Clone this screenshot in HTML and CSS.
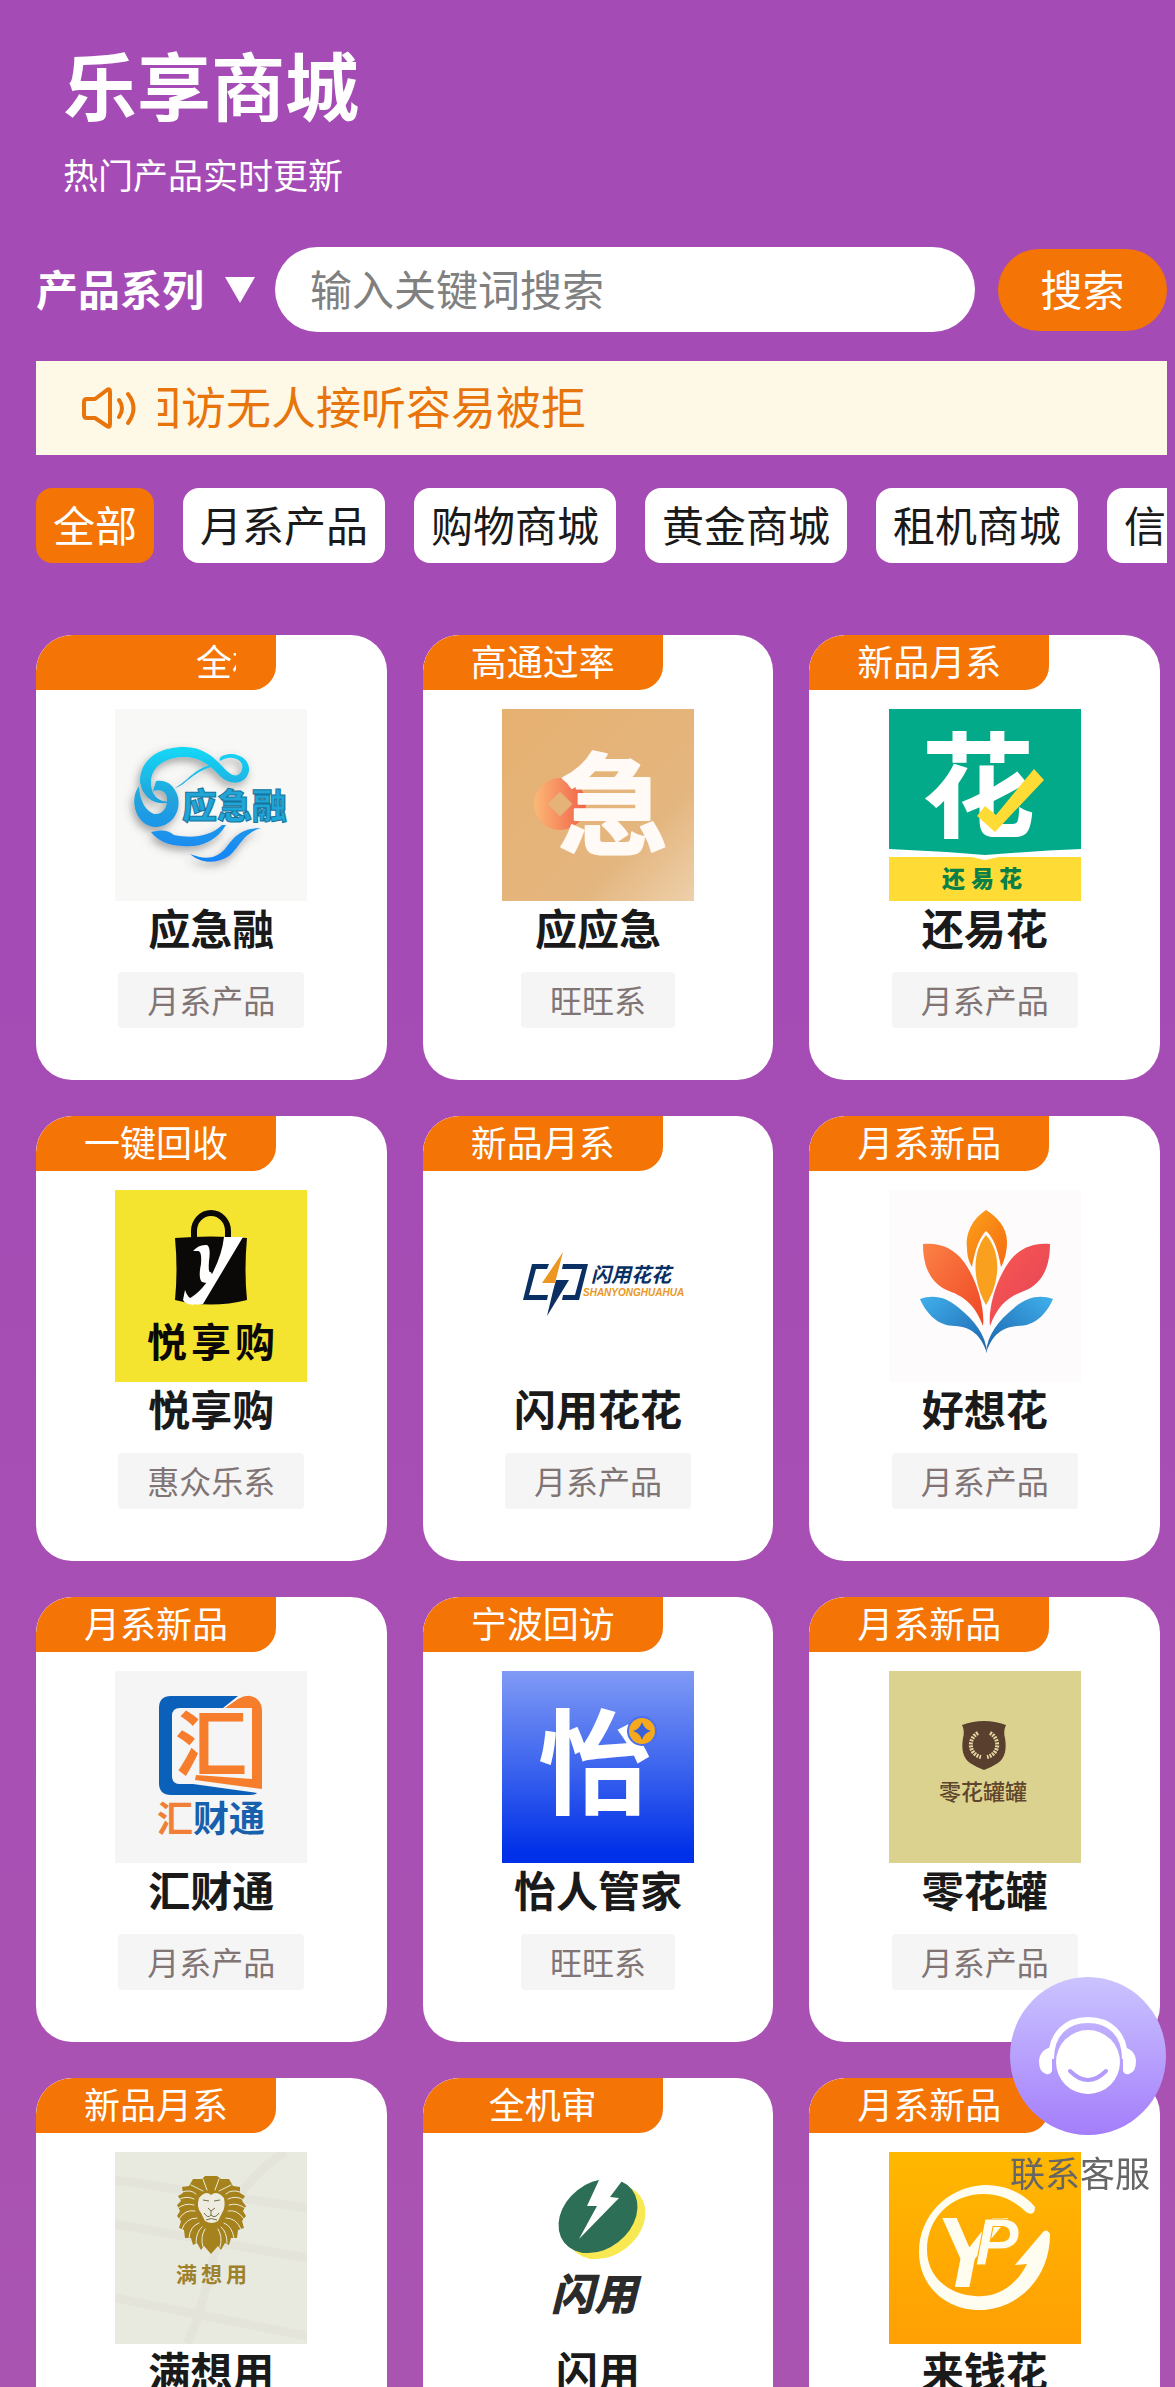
FILE: index.html
```html
<!DOCTYPE html>
<html lang="zh-CN">

<head>
    <meta charset="UTF-8">
    <meta name="viewport" content="width=device-width, initial-scale=1.0">
    <title>乐享商城</title>
    <link rel="stylesheet" href="styles.css">
</head>

<body>
    <div class="page">
        <header class="header">
            <h1>乐享商城</h1>
            <p>热门产品实时更新</p>
        </header>

        <!-- 搜索栏 -->
        <form class="search">
            <label class="series">
                <select aria-label="产品系列">
                    <option>产品系列</option>
                </select>
                <svg class="arrow" viewBox="0 0 30 26"><path d="M0 0h30L15 26z" fill="#fff"/></svg>
            </label>
            <input class="search-input" type="text" placeholder="输入关键词搜索" aria-label="输入关键词搜索">
            <button class="search-btn" type="button">搜索</button>
        </form>

        <!-- 公告 -->
        <div class="notice">
            <svg class="horn" viewBox="0 0 54 42" fill="none" stroke="#e8740c" stroke-width="4" stroke-linecap="round" stroke-linejoin="round">
                <path d="M2 15q0-3 3-3h8L25 3q3-2 3 2v32q0 4-3 2L13 31H5q-3 0-3-3z"/>
                <path d="M37 13q6 8 0 17M46 7q11 14 0 29"/>
            </svg>
            <div class="notice-clip"><span>回访无人接听容易被拒</span></div>
        </div>

        <!-- 分类 -->
        <nav class="tabs">
            <button class="tab active" type="button">全部</button>
            <button class="tab" type="button">月系产品</button>
            <button class="tab" type="button">购物商城</button>
            <button class="tab" type="button">黄金商城</button>
            <button class="tab" type="button">租机商城</button>
            <button class="tab" type="button">信用商城</button>
        </nav>

        <!-- 产品列表 -->
        <main class="grid">
            <article class="card">
                <div class="badge scrolling"><span>全机审</span></div>
                <svg class="logo" viewBox="0 0 192 192">
                    <defs>
                        <linearGradient id="sea" x1="0" y1="35" x2="0" y2="155" gradientUnits="userSpaceOnUse">
                            <stop offset="0" stop-color="#10dcf8"/>
                            <stop offset=".45" stop-color="#22a4dc"/>
                            <stop offset="1" stop-color="#1684f8"/>
                        </linearGradient>
                        <filter id="soft" x="-20%" y="-20%" width="140%" height="140%">
                            <feDropShadow dx="-2" dy="4" stdDeviation="4" flood-color="#444" flood-opacity=".5"/>
                        </filter>
                    </defs>
                    <rect width="192" height="192" fill="#f8f8f7"/>
                    <g fill="url(#sea)" filter="url(#soft)">
                        <path d="M62 91C45 99 28 92 25 73C25 50 44 38 69 38C87 38 98 47 108 58C116 67 122 69 126 63C130 56 125 50 118 49C113 48 109 50 105 52C103 48 109 45 117 45C128 46 135 53 134 62C131 76 115 77 105 67C94 55 83 47 67 48C49 49 36 58 36 74C36 88 46 96 62 91Z"/>
                        <path d="M24 77C13 92 22 118 41 118C57 117 66 103 63 88C60 77 52 70 41 72L38 82C45 80 51 82 52 89C53 99 47 106 39 105C31 102 25 93 24 77Z"/>
                        <path d="M60 79C70 77 76 64 96 58L99 55C79 59 73 72 60 79Z"/>
                        <path d="M36 123C45 121 52 120 59 126C78 130 96 127 107 116L111 116C101 133 84 139 67 137C52 136 43 132 36 123Z"/>
                        <path d="M75 145C90 151 101 150 110 140C119 128 126 119 146 119C127 125 125 138 114 147C102 155 86 155 75 145Z"/>
                    </g>
                    <text x="67" y="110" font-size="35" font-weight="900" fill="#20a6d6" stroke="#16749e" stroke-width="1">应急融</text>
                </svg>
                <h2>应急融</h2>
                <span class="tag">月系产品</span>
            </article>

            <article class="card">
                <div class="badge"><span>高通过率</span></div>
                <svg class="logo" viewBox="0 0 192 192">
                    <defs>
                        <linearGradient id="sand" x1="0" y1="0" x2="1" y2="1">
                            <stop offset="0" stop-color="#e6b070"/>
                            <stop offset=".7" stop-color="#e4b67f"/>
                            <stop offset="1" stop-color="#eed0ab"/>
                        </linearGradient>
                        <linearGradient id="coin" x1="0" y1="0" x2="1" y2="0">
                            <stop offset="0" stop-color="#fcb876"/>
                            <stop offset="1" stop-color="#f06148"/>
                        </linearGradient>
                    </defs>
                    <rect width="192" height="192" fill="url(#sand)"/>
                    <circle cx="58" cy="95" r="26" fill="url(#coin)"/>
                    <path d="M58 84l11 11-11 11-11-11z" fill="#e5b278" stroke="#e5b278" stroke-width="2" stroke-linejoin="round"/>
                    <text x="56" y="137" font-size="110" font-weight="700" fill="#fffaf6" stroke="#fffaf6" stroke-width="2" stroke-linejoin="round">急</text>
                </svg>
                <h2>应应急</h2>
                <span class="tag">旺旺系</span>
            </article>

            <article class="card">
                <div class="badge"><span>新品月系</span></div>
                <svg class="logo" viewBox="0 0 192 192">
                    <rect width="192" height="192" fill="#fff"/>
                    <path d="M0 0H192V140Q144 142 96 146Q48 142 0 140Z" fill="#02aa89"/>
                    <path d="M0 148H82L96 151L110 148H192V192H0Z" fill="#ffdb36"/>
                    <text x="32" y="119" font-size="114" font-weight="700" fill="#fff">花</text>
                    <path d="M88 107L96 97L107 106L145 60L155 71L106 123Z" fill="#ffdb36"/>
                    <text x="53 82 110" y="178" font-size="23" font-weight="900" fill="#0a7f48">还易花</text>
                </svg>
                <h2>还易花</h2>
                <span class="tag">月系产品</span>
            </article>

            <article class="card">
                <div class="badge"><span>一键回收</span></div>
                <svg class="logo" viewBox="0 0 192 192">
                    <rect width="192" height="192" fill="#f4e430"/>
                    <path d="M79 50V41a17 18 0 0 1 34 0V50" fill="none" stroke="#0b0808" stroke-width="6"/>
                    <path d="M60 48Q96 45 132 48Q129 80 132 110Q96 119 60 110Q63 80 60 48Z" fill="#0b0808"/>
                    <path d="M109 47H128L88 114Q78 116 69 111Q85 105 97 84Q107 65 109 47Z" fill="#fff"/>
                    <path d="M78 61Q84 54 92 55Q96 57 94 71Q93 84 96 82L100 92Q93 94 87 92Q83 88 86 74Q87 61 83 61Q80 61 78 61Z" fill="#fff"/>
                    <path d="M70 100Q74 112 82 108L78 115Q70 114 68 110Z" fill="#fff"/>
                    <text x="32 76 120" y="167" font-size="40" font-weight="700" fill="#0b0808">悦享购</text>
                </svg>
                <h2>悦享购</h2>
                <span class="tag">惠众乐系</span>
            </article>

            <article class="card">
                <div class="badge"><span>新品月系</span></div>
                <svg class="logo" viewBox="0 0 192 192">
                    <g fill="#0a2f63">
                        <path d="M21 110L30 74H47L45 79H34L27 105H46L45 110Z"/>
                        <path d="M61 74H86L77 110H60L61 105H73L80 79H60Z"/>
                        <path d="M54 90H67L45 126L51 101Z"/>
                    </g>
                    <path d="M61 62L40 93H53Z" fill="#eb9722"/>
                    <text x="89" y="92" font-size="20" font-weight="700" font-style="italic" fill="#0a2f63">闪用花花</text>
                    <text class="latin" x="81" y="106" font-size="10" font-weight="700" font-style="italic" fill="#eb9722">SHANYONGHUAHUA</text>
                </svg>
                <h2>闪用花花</h2>
                <span class="tag">月系产品</span>
            </article>

            <article class="card">
                <div class="badge"><span>月系新品</span></div>
                <svg class="logo" viewBox="0 0 192 192">
                    <defs>
                        <linearGradient id="petalA" x1="0" y1="0" x2="1" y2="1"><stop offset="0" stop-color="#fb8246"/><stop offset="1" stop-color="#ef4624"/></linearGradient>
                        <linearGradient id="petalB" x1="0" y1="0" x2="1" y2="1"><stop offset="0" stop-color="#fa5a50"/><stop offset="1" stop-color="#e24258"/></linearGradient>
                        <linearGradient id="petalC" x1="0" y1="0" x2="1" y2="1"><stop offset="0" stop-color="#41b0ec"/><stop offset="1" stop-color="#1b64ac"/></linearGradient>
                        <linearGradient id="petalE" x1="1" y1="0" x2="0" y2="1"><stop offset="0" stop-color="#41b0ec"/><stop offset="1" stop-color="#1b64ac"/></linearGradient>
                        <linearGradient id="petalD" x1="0" y1="0" x2="1" y2="1"><stop offset="0" stop-color="#fba21a"/><stop offset="1" stop-color="#f66a10"/></linearGradient>
                    </defs>
                    <rect width="192" height="192" fill="#fdfbfc"/>
                    <path d="M97 20C83 29 76 44 78 58C78 66 80 72 83 77C86 60 90 48 97 41C105 48 109 60 112 77C116 70 118 60 118 52C118 37 108 27 97 20Z" fill="url(#petalD)"/>
                    <path d="M97 45C83 62 83 90 97 115C112 90 112 62 97 45Z" fill="#f9a01e"/>
                    <path d="M34 54C34 80 44 95 60 101C76 107 86 115 94 136C96 118 88 90 75 72C65 58 50 52 34 54Z" fill="url(#petalA)"/>
                    <path d="M161 54C161 80 151 95 135 101C119 107 109 115 101 136C99 118 107 90 120 72C130 58 145 52 161 54Z" fill="url(#petalB)"/>
                    <path d="M31 109C38 125 50 136 66 136C82 137 92 145 98 163C97 145 85 130 70 118C58 107 44 104 31 109Z" fill="url(#petalC)"/>
                    <path d="M164 109C157 125 145 136 129 136C113 137 103 145 97 163C98 145 110 130 125 118C137 107 151 104 164 109Z" fill="url(#petalE)"/>
                </svg>
                <h2>好想花</h2>
                <span class="tag">月系产品</span>
            </article>

            <article class="card">
                <div class="badge"><span>月系新品</span></div>
                <svg class="logo" viewBox="0 0 192 192">
                    <rect width="192" height="192" fill="#f5f5f5"/>
                    <path d="M123 25L108 37H65Q57 37 57 45V105Q57 113 65 113H78L142 122Q140 124 134 124H56Q44 124 44 112V37Q44 25 56 25Z" fill="#0b60ba"/>
                    <path d="M110 37L123 28Q135 21 143 29Q147 33 147 40V118L80 109L81 104L137 108V37Z" fill="#f67d2c"/>
                    <text x="60" y="99" font-size="72" font-weight="700" fill="#f67d2c">汇</text>
                    <text x="42" y="161" font-size="36" font-weight="700" fill="#1660ae"><tspan fill="#f08038">汇</tspan>财通</text>
                </svg>
                <h2>汇财通</h2>
                <span class="tag">月系产品</span>
            </article>

            <article class="card">
                <div class="badge"><span>宁波回访</span></div>
                <svg class="logo" viewBox="0 0 192 192">
                    <defs>
                        <linearGradient id="blue" x1="0" y1="0" x2="0" y2="1"><stop offset="0" stop-color="#809af5"/><stop offset=".5" stop-color="#3c64ee"/><stop offset=".95" stop-color="#0030e8"/></linearGradient>
                    </defs>
                    <rect width="192" height="192" fill="url(#blue)"/>
                    <text x="36" y="134" font-size="114" font-weight="700" fill="#fff">怡</text>
                    <circle cx="140" cy="60" r="15" fill="#4a70ef"/>
                    <circle cx="140" cy="60" r="13" fill="#f6a91c"/>
                    <path d="M140 51Q142 58 149 60Q142 62 140 69Q138 62 131 60Q138 58 140 51Z" fill="#3a60d8"/>
                </svg>
                <h2>怡人管家</h2>
                <span class="tag">旺旺系</span>
            </article>

            <article class="card">
                <div class="badge"><span>月系新品</span></div>
                <svg class="logo" viewBox="0 0 192 192">
                    <rect width="192" height="192" fill="#dcd28f"/>
                    <path d="M73 54Q95 46 117 54Q114 60 116 67Q119 85 109 92Q103 96 95 99Q87 96 81 92Q71 85 74 67Q76 60 73 54Z" fill="#583f2e"/>
                    <g fill="none" stroke="#e2d3a0" stroke-width="4" stroke-dasharray="2 1">
                        <path d="M89 62C79 67 79 83 92 86"/>
                        <path d="M101 62C111 67 111 83 98 86"/>
                    </g>
                    <text x="50" y="129" font-size="22" font-weight="500" fill="#5d452e">零花罐罐</text>
                </svg>
                <h2>零花罐</h2>
                <span class="tag">月系产品</span>
            </article>

            <article class="card">
                <div class="badge"><span>新品月系</span></div>
                <svg class="logo" viewBox="0 0 192 192">
                    <rect width="192" height="192" fill="#e9eadf"/>
                    <g fill="none" stroke="#e4e4da" stroke-width="9">
                        <path d="M0 28L192 56M0 72L192 106M0 146L192 184M170 0Q115 35 100 100T72 192"/>
                    </g>
                    <path d="M96 102L89 94L86 98L82 91L78 93L76 86L70 86L69 78L64 76L66 69L62 64L65 59L62 53L66 49L63 44L68 41L67 35L74 34L78 27L87 27L90 24H102L106 27L114 27L118 34L125 35L125 41L130 44L127 49L131 54L128 59L131 64L127 69L129 76L123 78L122 86L116 86L114 93L110 91L106 98L103 94Z" fill="#a5821b"/>
                    <g fill="none" stroke="#ecebd9" stroke-width="1" stroke-linecap="round">
                        <path d="M88 27L92 38M104 27L100 38M76 33L88 39M116 33L104 39M67 40Q76 37 81 42M125 40Q116 37 111 42M63 48Q71 43 79 47M129 48Q121 43 113 47M62 57Q70 50 79 53M131 57Q123 50 114 53M64 67Q70 57 80 59M129 67Q122 57 113 59M67 77Q71 66 82 66M126 77Q121 66 111 66M74 86Q75 74 84 71M119 86Q117 74 109 71M81 91Q81 80 87 75M112 91Q112 80 106 75M88 95Q85 85 90 77M105 95Q108 85 103 77"/>
                    </g>
                    <path d="M84 46Q91 38 96 43Q102 38 109 46Q111 55 107 61L103 69Q97 73 90 69L86 61Q81 55 84 46Z" fill="#eeece0"/>
                    <path d="M88 48L94 49M99 49L105 48M93 56L96 59L100 56M96 59V63M89 61Q93 67 96 63Q100 67 104 61M91 68Q96 65 102 68" fill="none" stroke="#777044" stroke-width="1"/>
                    <text x="61 86 111" y="130" font-size="21" font-weight="700" fill="#9d812b">满想用</text>
                </svg>
                <h2>满想用</h2>
                <span class="tag">月系产品</span>
            </article>

            <article class="card">
                <div class="badge"><span>全机审</span></div>
                <svg class="logo" viewBox="0 0 192 192">
                    <ellipse cx="104" cy="70" rx="43" ry="33" transform="rotate(-38 104 70)" fill="#f8e851"/>
                    <ellipse cx="96" cy="64" rx="43" ry="33" transform="rotate(-38 96 64)" fill="#2d6e57"/>
                    <path d="M97 28L85 54H95L77 87L117 46L108 45L120 29L112 20Z" fill="#fff"/>
                    <text x="49" y="158" font-size="43" font-weight="900" font-style="italic" fill="#2b2b2b">闪用</text>
                </svg>
                <h2>闪用</h2>
                <span class="tag">月系产品</span>
            </article>

            <article class="card">
                <div class="badge"><span>月系新品</span></div>
                <svg class="logo" viewBox="0 0 192 192">
                    <defs>
                        <linearGradient id="gold" x1="0" y1="0" x2="0" y2="1"><stop offset="0" stop-color="#ffb800"/><stop offset="1" stop-color="#ff9f04"/></linearGradient>
                    </defs>
                    <rect width="192" height="192" fill="url(#gold)"/>
                    <path d="M146 55C132 38 112 33 95 33C58 35 30 64 30 100C30 135 58 158 90 158C127 158 161 128 161 82Q158 76 154 80L126 113L138 112C128 132 110 146 86 144C56 142 38 122 38 98C38 66 62 42 95 42C110 42 125 48 137 60Q146 65 146 55Z" fill="#fffdf0"/>
                    <g class="latin" font-weight="700" font-style="italic" fill="#fffdf0">
                        <text x="45" y="135" font-size="100">Y</text>
                        <text x="86" y="113" font-size="66" stroke="#ffad02" stroke-width="1">P</text>
                    </g>
                </svg>
                <h2>来钱花</h2>
                <span class="tag">月系产品</span>
            </article>
        </main>
    </div>

    <!-- 客服悬浮按钮 -->
    <a class="service" href="#">
        <svg viewBox="0 0 156 158">
            <defs>
                <linearGradient id="violet" x1="0" y1="0" x2="0" y2="1"><stop offset="0" stop-color="#cbc4ff"/><stop offset="1" stop-color="#a47efb"/></linearGradient>
            </defs>
            <ellipse cx="78" cy="79" rx="78" ry="79" fill="url(#violet)"/>
            <path d="M41 82C41 57 56 43 78 43S115 57 115 82" fill="none" stroke="#fff" stroke-width="6"/>
            <path d="M42 70V94Q40 98 36 97Q29 95 29 84Q30 72 42 70ZM113 70V94Q115 98 119 97Q126 95 126 84Q125 72 113 70Z" fill="#fff"/>
            <circle cx="78" cy="85" r="32" fill="#fff"/>
            <path d="M60 94Q78 112 96 94" fill="none" stroke="#b29bfb" stroke-width="4" stroke-linecap="round"/>
        </svg>
        <span>联系客服</span>
    </a>
</body>

</html>
```
FILE: styles.css
```css
* {
    box-sizing: border-box;
}

body {
    margin: 0;
    height: 100vh;
    overflow: hidden;
    font-family: "Noto Sans CJK SC", "Noto Sans", sans-serif;
    color: #1a1a1a;
    background: linear-gradient(#a54bb5 0%, #a54bb5 40%, #aa54b2 100%);
}

h1,
h2,
p {
    margin: 0;
}

button,
input,
select {
    font-family: inherit;
    border: none;
    padding: 0;
}

.page {
    height: 100%;
    overflow-y: auto;
    scrollbar-width: none;
    padding: 38px 8px 0 36px;
}

.header {
    padding-left: 27px;
    color: #fff;
}

.header h1 {
    font-size: 74px;
    line-height: 90px;
}

.header p {
    margin-top: 20px;
    font-size: 35px;
    line-height: 52px;
}

/* 搜索栏 */
.search {
    display: flex;
    align-items: center;
    margin-top: 47px;
}

.series {
    display: flex;
    align-items: center;
    gap: 20px;
    margin-right: 20px;
}

.series select {
    appearance: none;
    padding-bottom: 4px;
    background: transparent;
    color: #fff;
    font-size: 42px;
    font-weight: bold;
    line-height: 60px;
}

.arrow {
    width: 30px;
    height: 26px;
}

.search-input {
    flex: 1;
    min-width: 0;
    height: 85px;
    padding: 0 35px 4px;
    border-radius: 43px;
    background: #fff;
    font-size: 42px;
}

.search-input::placeholder {
    color: #808080;
}

.search-btn {
    width: 169px;
    height: 82px;
    margin-left: 23px;
    padding-bottom: 4px;
    border-radius: 41px;
    background: #f47405;
    color: #fff;
    font-size: 42px;
}

/* 公告 */
.notice {
    display: flex;
    align-items: center;
    height: 94px;
    margin-top: 29px;
    padding-left: 46px;
    background: #fef9e7;
}

.horn {
    width: 54px;
    height: 42px;
    margin-right: 22px;
}

.notice-clip {
    flex: 1;
    padding-bottom: 4px;
    overflow: hidden;
    white-space: nowrap;
    color: #e8740c;
    font-size: 45px;
    line-height: 66px;
}

.notice-clip span {
    margin-left: -22px;
}

/* 分类 */
.tabs {
    display: flex;
    gap: 29px;
    margin-top: 33px;
    overflow: hidden;
}

.tab {
    flex: none;
    height: 75px;
    padding: 0 17px 4px;
    border-radius: 16px;
    background: #fff;
    color: #1a1a1a;
    font-size: 42px;
}

.tab.active {
    background: #f47405;
    color: #fff;
}

/* 产品列表 */
.grid {
    display: grid;
    grid-template-columns: repeat(3, 1fr);
    gap: 36px;
    margin-top: 72px;
    padding-right: 7px;
}

.card {
    display: flex;
    flex-direction: column;
    align-items: center;
    padding-bottom: 52px;
    border-radius: 36px;
    background: #fff;
    overflow: hidden;
}

.badge {
    align-self: flex-start;
    width: 240px;
    padding: 0 40px 4px;
    border-radius: 36px 0 24px 0;
    background: #f47405;
    color: #fff;
    font-size: 36px;
    line-height: 51px;
    text-align: center;
}

/* 滚动中的标签文字 */
.badge.scrolling span {
    display: block;
    overflow: hidden;
    white-space: nowrap;
    text-align: left;
    text-indent: 120px;
}

.logo {
    display: block;
    width: 192px;
    height: 192px;
    margin-top: 19px;
}

.latin {
    font-family: "Liberation Sans", sans-serif;
}

.card h2 {
    font-size: 42px;
    line-height: 52px;
}

.tag {
    margin-top: 19px;
    padding: 0 29px 2px;
    border-radius: 4px;
    background: #f5f5f5;
    color: #807474;
    font-size: 32px;
    line-height: 54px;
}

/* 客服 */
.service {
    position: fixed;
    right: 9px;
    bottom: 188px;
    width: 156px;
    color: #666;
    font-size: 35px;
    line-height: 54px;
    text-decoration: none;
    white-space: nowrap;
}

.service svg {
    display: block;
    width: 156px;
    height: 158px;
    margin-bottom: 10px;
}
```
